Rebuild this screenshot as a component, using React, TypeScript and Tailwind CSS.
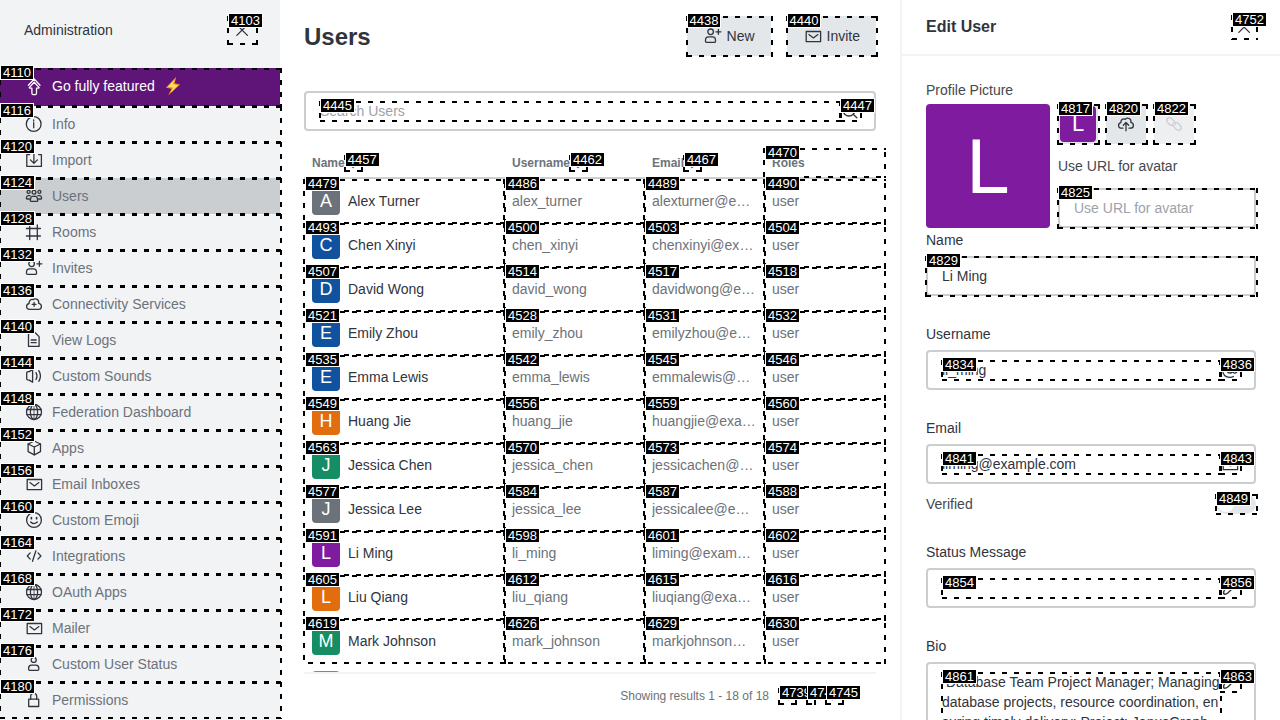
import React from "react";

type IconName = keyof typeof icons;

const icons = {
  close: <path d="M4.8 4.8 15.4 15.4M15.4 4.8 4.8 15.4" />,
  upgrade: (
    <>
      <path d="M4.4 9.2 10.2 3l5.8 6.2" />
      <path d="M10.2 6.2 5.4 11.4q-.4.7.5.7h2V17q0 1.6 1.3 1.6h2q1.3 0 1.3-1.6v-4.9h2q.9 0 .5-.7Z" />
    </>
  ),
  info: (
    <>
      <circle cx="9.7" cy="10" r="7.4" />
      <path d="M9.7 8.6v5.2M9.7 5.8v1.3" />
    </>
  ),
  import: (
    <>
      <path d="M5.6 4.6H2.8v11.8h14.6V4.6h-2.8" />
      <path d="M9.9 2.6v10.6M6.4 9.9l3.5 3.5 3.5-3.5" />
    </>
  ),
  team: (
    <>
      <circle cx="4.6" cy="5.9" r="1.5" />
      <circle cx="10" cy="6.2" r="1.9" />
      <circle cx="15.4" cy="5.9" r="1.5" />
      <path d="M7 15.4q-.8 0-.7-.9l.4-2.4q.3-1.8 1.8-1.8h3q1.5 0 1.8 1.8l.4 2.4q.1.9-.7.9Z" />
      <path d="M5.4 13H3.2q-1-.1-.8-1.1.3-2.2 1.7-2.2h2M14.6 13h2.2q1-.1.8-1.1-.3-2.2-1.7-2.2h-2" />
    </>
  ),
  hash: <path d="M5.7 3v14.5M13.3 3v14.5M2.4 6.5h14M2.4 14h14" />,
  userPlus: (
    <>
      <circle cx="7.6" cy="5.8" r="2.8" />
      <path d="M3.7 16.4q-1.2 0-1.2-1.2v-.9q0-3.4 3-3.4h4q3 0 3 3.4v.9q0 1.2-1.2 1.2ZM15.4 3.3v5M12.9 5.8h5" />
    </>
  ),
  cloudPlus: (
    <>
      <path d="M5.6 15.3q-3 0-3-2.9 0-2.5 2.5-2.9-.3-2 1.1-3.2Q7.5 5 9 5.7q1.5-1.4 3.7-.6 2.4 1 2 4.2 2.7.5 2.7 3.1 0 2.9-3 2.9Z" />
      <path d="M10.1 8.5v3.8M8.2 10.4h3.8" />
    </>
  ),
  doc: (
    <>
      <path d="M4.5 3h7l3.6 3.6v9.8H4.5Z" />
      <path d="M7.2 10h5M7.2 12.7h5" />
    </>
  ),
  sound: (
    <>
      <path d="M5.3 5.6 8.6 3.4v12.9l-3.3-2.2q-2.6.3-2.6-1.7V7.3q0-2 2.6-1.7Z" />
      <path d="M12 6.5q2 3.5 0 7M14.8 4.6q3.3 5.3 0 10.7" />
    </>
  ),
  globe: (
    <>
      <circle cx="10" cy="10" r="7.5" />
      <path d="M2.8 7.5h14.4M2.8 12.6h14.4" />
      <ellipse cx="10" cy="10" rx="3.6" ry="7.5" />
      <path d="M10 2.5v15" strokeWidth="0.8" />
    </>
  ),
  cube: (
    <>
      <path d="m10.3 3 6.2 3v7.6l-6.2 3.2-6.2-3.2V6Z" />
      <path d="m4.1 6 6.2 3 6.2-3M10.3 9v7.8" />
    </>
  ),
  mail: (
    <>
      <path d="M3.2 5.5h14.4v10.2H3.2Z" />
      <path d="m5.9 8.6 4.5 3.3 4.5-3.3" />
    </>
  ),
  smile: (
    <>
      <circle cx="10" cy="10" r="7.4" />
      <path d="M6.7 12q3.2 3.3 6.6 0" />
      <path d="M7.4 7.5v1.2M12.6 7.5v1.2" strokeWidth="1.7" />
    </>
  ),
  code: <path d="M6.2 6.9 3.3 10l2.9 3.1M14 6.9l2.9 3.1-2.9 3.1M11.9 4.8 8.5 15.3" />,
  user: (
    <>
      <circle cx="9.7" cy="5.9" r="2.5" />
      <path d="M5.7 16.3q-1.1 0-1.1-1.2v-.8q0-3.2 2.9-3.2h4.4q2.9 0 2.9 3.2v.8q0 1.2-1.1 1.2Z" />
    </>
  ),
  lock: (
    <>
      <path d="M4.7 9.2h10v7.3h-10Z" />
      <path d="M6.7 9V6.3q0-3 3-3t3 3V9" />
    </>
  ),
  cloudUp: (
    <>
      <path d="M7 14.2H5.6q-3 0-3-2.8 0-2.3 2.3-2.7-.3-2.2 1.3-3.3 1.5-1 3 0 1.7-1.9 4-.9 2.2 1.1 1.7 3.9 2.5.6 2.5 3 0 2.8-3 2.8H13" />
      <path d="M10 16.8V8.6M7.3 11.2 10 8.5l2.7 2.7" />
    </>
  ),
  link: (
    <>
      <path d="M8.7 11.3H7.3q-1 0-1.9-1L3.5 8.2q-1.6-2.2.2-3.9 1.7-1.5 3.7.1l3.2 3.2q1.5 1.8.2 3.5" />
      <path d="M11.3 8.7h1.4q1 0 1.9 1l1.9 2.1q1.6 2.2-.2 3.9-1.7 1.5-3.7-.1l-3.2-3.2q-1.5-1.8-.2-3.5" />
    </>
  ),
  search: (
    <>
      <circle cx="9" cy="9" r="6" />
      <path d="m13.2 13.2 3.6 3.6" />
    </>
  ),
  at: (
    <>
      <circle cx="10" cy="10" r="3" />
      <path d="M13 7v4.5q.3 1.9 2 1.7 2.3-.5 2.3-3.2 0-7.3-7.3-7.3T2.7 10 10 17.3q2 0 3.4-.8" />
    </>
  ),
  pencil: <path d="M4 16.2q-1.2-1.7.6-4.4L13 3.4l3.4 3.4-8.6 8.2Q6.2 16.5 4 16.2Z" />,
  sort: <path d="m6 8 4-4 4 4M6 12l4 4 4-4" />,
  prev: <path d="m12 5-5 5 5 5" />,
  next: <path d="m8 5 5 5-5 5" />,
};

function Icon({ name, className = "size-5" }: { name: IconName; className?: string }) {
  return (
    <svg
      viewBox="0 0 20 20"
      fill="none"
      stroke="currentColor"
      strokeWidth="1.3"
      strokeLinecap="round"
      strokeLinejoin="round"
      aria-hidden="true"
      className={`shrink-0 ${className}`}
    >
      {icons[name]}
    </svg>
  );
}

type MarkProps = {
  id: number;
  className?: string;
  labelClassName?: string;
  endLineX?: string;
  endLineY?: string;
};

function Mark({ id, className = "-right-0.5", labelClassName = "left-px", endLineX = "left-px", endLineY = "top-0" }: MarkProps) {
  return (
    <span aria-hidden="true" className={`pointer-events-none absolute top-0 -bottom-px -left-px ${className}`}>
      <span className="absolute top-0 right-0 left-px h-0.5 bg-[repeating-linear-gradient(90deg,#000_0_5px,transparent_5px_12px)]" />
      <span
        className={`absolute right-0 bottom-0 h-0.5 bg-[repeating-linear-gradient(90deg,#000_0_5px,transparent_5px_12px)] ${endLineX}`}
      />
      <span className="absolute inset-y-0 left-0 w-0.5 bg-[repeating-linear-gradient(180deg,#000_0_5px,transparent_5px_12px)]" />
      <span
        className={`absolute right-0 bottom-0 w-0.5 bg-[repeating-linear-gradient(180deg,#000_0_5px,transparent_5px_12px)] ${endLineY}`}
      />
      <span
        className={`absolute -top-[3px] border border-white bg-black px-0.5 font-['Liberation_Sans',Arial,sans-serif] text-[13px] leading-[13px] font-normal text-white ${labelClassName}`}
      >
        {id}
      </span>
    </span>
  );
}

function CellMark({ id, last = false }: { id: number; last?: boolean }) {
  return (
    <Mark
      id={id}
      className={last ? "-right-[10px]" : "-right-0.5"}
      labelClassName="left-0.5"
      endLineX="left-[5px]"
      endLineY="top-1"
    />
  );
}

const navItems: { id: number; icon: IconName; label: string }[] = [
  { id: 4116, icon: "info", label: "Info" },
  { id: 4120, icon: "import", label: "Import" },
  { id: 4124, icon: "team", label: "Users" },
  { id: 4128, icon: "hash", label: "Rooms" },
  { id: 4132, icon: "userPlus", label: "Invites" },
  { id: 4136, icon: "cloudPlus", label: "Connectivity Services" },
  { id: 4140, icon: "doc", label: "View Logs" },
  { id: 4144, icon: "sound", label: "Custom Sounds" },
  { id: 4148, icon: "globe", label: "Federation Dashboard" },
  { id: 4152, icon: "cube", label: "Apps" },
  { id: 4156, icon: "mail", label: "Email Inboxes" },
  { id: 4160, icon: "smile", label: "Custom Emoji" },
  { id: 4164, icon: "code", label: "Integrations" },
  { id: 4168, icon: "globe", label: "OAuth Apps" },
  { id: 4172, icon: "mail", label: "Mailer" },
  { id: 4176, icon: "user", label: "Custom User Status" },
  { id: 4180, icon: "lock", label: "Permissions" },
];

const gray = "bg-[#6c727a]";
const blue = "bg-[#10529e]";
const orange = "bg-[#e26d0e]";
const green = "bg-[#158d65]";
const purple = "bg-[#7f1b9f]";

const users: { ids: number[]; name: string; username: string; email: string; color: string }[] = [
  { ids: [4479, 4486, 4489, 4490], name: "Alex Turner", username: "alex_turner", email: "alexturner@example.com", color: gray },
  { ids: [4493, 4500, 4503, 4504], name: "Chen Xinyi", username: "chen_xinyi", email: "chenxinyi@example.com", color: blue },
  { ids: [4507, 4514, 4517, 4518], name: "David Wong", username: "david_wong", email: "davidwong@example.com", color: blue },
  { ids: [4521, 4528, 4531, 4532], name: "Emily Zhou", username: "emily_zhou", email: "emilyzhou@example.com", color: blue },
  { ids: [4535, 4542, 4545, 4546], name: "Emma Lewis", username: "emma_lewis", email: "emmalewis@example.com", color: blue },
  { ids: [4549, 4556, 4559, 4560], name: "Huang Jie", username: "huang_jie", email: "huangjie@example.com", color: orange },
  { ids: [4563, 4570, 4573, 4574], name: "Jessica Chen", username: "jessica_chen", email: "jessicachen@example.com", color: green },
  { ids: [4577, 4584, 4587, 4588], name: "Jessica Lee", username: "jessica_lee", email: "jessicalee@example.com", color: gray },
  { ids: [4591, 4598, 4601, 4602], name: "Li Ming", username: "li_ming", email: "liming@example.com", color: purple },
  { ids: [4605, 4612, 4615, 4616], name: "Liu Qiang", username: "liu_qiang", email: "liuqiang@example.com", color: orange },
  { ids: [4619, 4626, 4629, 4630], name: "Mark Johnson", username: "mark_johnson", email: "markjohnson@example.com", color: green },
  { ids: [], name: "", username: "", email: "", color: orange },
];

function Sidebar() {
  return (
    <nav className="flex w-[280px] shrink-0 flex-col bg-[#f2f3f5]">
      <div className="flex h-[68px] shrink-0 items-center justify-between px-6 pb-2">
        <span>Administration</span>
        <button aria-label="Close administration" className="relative flex size-7 items-center justify-center">
          <Icon name="close" />
          <Mark id={4103} />
        </button>
      </div>
      <a href="#upgrade" className="relative flex h-[38px] shrink-0 items-center gap-2 bg-[#5f1477] px-6 pb-0.5 text-white">
        <Icon name="upgrade" />
        <span className="mr-0.5">Go fully featured</span>
        <svg viewBox="0 0 16 20" className="h-5 w-4" aria-hidden="true">
          <path d="M11.3.8.8 11.8l5.7.9-3.4 6.8L15.2 8.4l-5.6-1.2Z" fill="#f28c1b" />
          <path d="M10.2 2.8 2.7 10.9l5.4.7-2.9 5.3 7.9-7.7-5.2-1.1Z" fill="#fee05f" />
        </svg>
        <Mark id={4110} />
      </a>
      {navItems.map((item) => (
        <a
          key={item.id}
          href={`#${item.id}`}
          className={`relative flex h-9 shrink-0 items-center gap-2 px-6 text-[#6c727a] ${item.label === "Users" ? "bg-[#cbced1]" : ""}`}
        >
          <span className="text-[#2f343d]">
            <Icon name={item.icon} />
          </span>
          <span>{item.label}</span>
          <Mark id={item.id} />
        </a>
      ))}
    </nav>
  );
}

const columns = [
  { label: "Name", id: 4457, width: "w-[200px]" },
  { label: "Username", id: 4462, width: "w-[140px]" },
  { label: "Email", id: 4467, width: "w-[120px]" },
];

function UsersPage() {
  return (
    <main className="flex min-w-0 flex-1 flex-col px-6">
      <header className="flex h-[72px] shrink-0 items-center justify-between">
        <h1 className="pt-0.5 text-[24px] leading-8 font-bold">Users</h1>
        <div className="flex gap-4">
          <button className="relative flex h-10 items-center gap-1 bg-[#e4e7ea] px-4">
            <Icon name="userPlus" />
            New
            <Mark id={4438} />
          </button>
          <button className="relative flex h-10 items-center gap-1 bg-[#e4e7ea] px-4">
            <Icon name="mail" />
            Invite
            <Mark id={4440} />
          </button>
        </div>
      </header>
      <div className="mt-[19px] flex shrink-0 rounded border-2 border-[#cbced1] px-[14px] py-2">
        <div className="relative flex flex-1">
          <input
            aria-label="Search Users"
            placeholder="Search Users"
            className="h-5 w-full bg-transparent outline-none placeholder:text-[#9ea2a8]"
          />
          <Mark id={4445} />
        </div>
        <span className="relative">
          <Icon name="search" />
          <Mark id={4447} />
        </span>
      </div>
      <div className="mt-[13px] -mr-6 -ml-1 min-h-0 flex-1 overflow-hidden pt-1 pr-6 pl-1">
        <table className="w-full table-fixed border-separate border-spacing-0 text-left">
          <thead className="text-[12px] leading-4 text-[#6c727a]">
            <tr>
              {columns.map((column) => (
                <th key={column.id} className={`h-[31px] border-b-2 border-[#cbced1] px-2 py-0 ${column.width}`}>
                  <span className="flex items-center">
                    {column.label}
                    <button aria-label={`Sort by ${column.label}`} className="relative">
                      <Icon name="sort" className="size-4" />
                      <Mark id={column.id} />
                    </button>
                  </span>
                </th>
              ))}
              <th className="border-b-2 border-[#cbced1] p-0">
                <span className="relative flex h-[29px] items-center px-2">
                  Roles
                  <CellMark id={4470} last />
                </span>
              </th>
            </tr>
          </thead>
          <tbody className="text-[#6c727a]">
            {users.map((user) => (
              <tr key={user.username} className="h-11">
                <td className="relative px-2 py-0">
                  <span className="flex items-center gap-2 text-[#2f343d]">
                    <span className={`flex size-7 items-center justify-center rounded-sm text-[18px] text-white ${user.color}`}>
                      {user.name.charAt(0)}
                    </span>
                    {user.name}
                  </span>
                  {user.ids.length > 0 && <CellMark id={user.ids[0]} />}
                </td>
                <td className="relative px-2 py-0">
                  {user.username}
                  {user.ids.length > 0 && <CellMark id={user.ids[1]} />}
                </td>
                <td className="relative px-2 py-0">
                  <span className="block truncate">{user.email}</span>
                  {user.ids.length > 0 && <CellMark id={user.ids[2]} />}
                </td>
                <td className="relative px-2 py-0">
                  {user.name && "user"}
                  {user.ids.length > 0 && <CellMark id={user.ids[3]} last />}
                </td>
              </tr>
            ))}
          </tbody>
        </table>
      </div>
      <footer className="flex h-12 shrink-0 items-center justify-end border-t-2 border-[#f2f3f5] pr-[34px] pb-0.5 text-[12px] text-[#6c727a]">
        <span className="mr-[10px]">Showing results 1 - 18 of 18</span>
        <div className="flex items-center gap-3">
          <button aria-label="Previous page" className="relative">
            <Icon name="prev" className="size-4" />
            <Mark id={4739} />
          </button>
          <button className="relative h-4 w-[7px] leading-4">
            1
            <Mark id={4742} />
          </button>
          <button aria-label="Next page" className="relative">
            <Icon name="next" className="size-4" />
            <Mark id={4745} />
          </button>
        </div>
      </footer>
    </main>
  );
}

function IconField(props: { label: string; inputId: string; value: string; icon: IconName; marks: [number, number]; multiline?: boolean }) {
  const { label, inputId, value, icon, marks, multiline } = props;
  return (
    <div className="flex flex-col gap-1.5">
      <label htmlFor={inputId}>{label}</label>
      <div className="flex items-start rounded border-2 border-[#cbced1] px-[14px] py-2">
        <div className="relative flex min-w-0 flex-1">
          {multiline ? (
            <textarea id={inputId} defaultValue={value} rows={4} className="w-full resize-none overflow-hidden whitespace-pre outline-none" />
          ) : (
            <input id={inputId} defaultValue={value} className="h-5 w-full bg-transparent outline-none" />
          )}
          <Mark id={marks[0]} />
        </div>
        <span className="relative">
          <Icon name={icon} />
          <Mark id={marks[1]} />
        </span>
      </div>
    </div>
  );
}

const bio =
  " Database Team Project Manager; Managing\ndatabase projects, resource coordination, en\nsuring timely delivery; Project: JanusGraph\n";

function EditUser() {
  return (
    <aside className="flex w-[380px] shrink-0 flex-col overflow-hidden border-l-2 border-[#f2f3f5]">
      <header className="flex h-14 shrink-0 items-center justify-between border-b-2 border-[#f2f3f5] px-6">
        <h2 className="text-[16px] leading-6 font-bold">Edit User</h2>
        <button aria-label="Close panel" className="relative flex size-6 items-center justify-center">
          <Icon name="close" />
          <Mark id={4752} />
        </button>
      </header>
      <form className="flex flex-col px-6 pt-6">
        <span className="mb-1 text-[#45484d]">Profile Picture</span>
        <div className="flex gap-2">
          <span className="flex size-[124px] shrink-0 items-center justify-center rounded bg-[#7f1b9f] text-[78px] leading-none text-white">
            L
          </span>
          <div className="flex min-w-0 flex-1 flex-col">
            <div className="flex gap-2">
              <button type="button" aria-label="Initials avatar" className="relative flex size-10 items-center justify-center bg-[#e4e7ea]">
                <span className="flex size-9 items-center justify-center rounded bg-[#7f1b9f] text-[22px] text-white">L</span>
                <Mark id={4817} />
              </button>
              <button type="button" aria-label="Upload avatar" className="relative flex size-10 items-center justify-center bg-[#e4e7ea]">
                <Icon name="cloudUp" />
                <Mark id={4820} />
              </button>
              <button type="button" disabled aria-label="Add URL" className="relative flex size-10 items-center justify-center bg-[#eeeff1]">
                <span className="text-[#cbced1]">
                  <Icon name="link" />
                </span>
                <Mark id={4822} />
              </button>
            </div>
            <label htmlFor="avatar-url" className="my-3 text-[#45484d]">
              Use URL for avatar
            </label>
            <div className="relative">
              <input
                id="avatar-url"
                placeholder="Use URL for avatar"
                className="block h-10 w-full rounded border-2 border-[#cbced1] px-[14px] outline-none placeholder:text-[#9ea2a8]"
              />
              <Mark id={4825} />
            </div>
          </div>
        </div>
        <label htmlFor="name" className="mt-0.5 mb-1.5">
          Name
        </label>
        <div className="relative mb-7">
          <input id="name" defaultValue="Li Ming" className="block h-10 w-full rounded border-2 border-[#cbced1] px-[14px] outline-none" />
          <Mark id={4829} />
        </div>
        <IconField label="Username" inputId="username" value="li_ming" icon="at" marks={[4834, 4836]} />
        <div className="h-7" />
        <IconField label="Email" inputId="email" value="liming@example.com" icon="mail" marks={[4841, 4843]} />
        <div className="mt-[10px] mb-7 flex items-center justify-between text-[#45484d]">
          <label htmlFor="verified">Verified</label>
          <span className="relative block h-5 w-10">
            <input
              id="verified"
              type="checkbox"
              className="block h-5 w-10 appearance-none rounded-full bg-[#e4e7ea]"
            />
            <span className="pointer-events-none absolute top-0.5 left-0.5 size-4 rounded-full bg-white" />
            <Mark id={4849} />
          </span>
        </div>
        <IconField label="Status Message" inputId="status" value="" icon="pencil" marks={[4854, 4856]} />
        <div className="h-7" />
        <IconField label="Bio" inputId="bio" value={bio} icon="pencil" marks={[4861, 4863]} multiline />
      </form>
    </aside>
  );
}

export default function App() {
  return (
    <div className="flex h-screen overflow-hidden bg-white font-['Liberation_Sans',Arial,sans-serif] text-[14px] leading-5 text-[#2f343d]">
      <Sidebar />
      <UsersPage />
      <EditUser />
    </div>
  );
}
